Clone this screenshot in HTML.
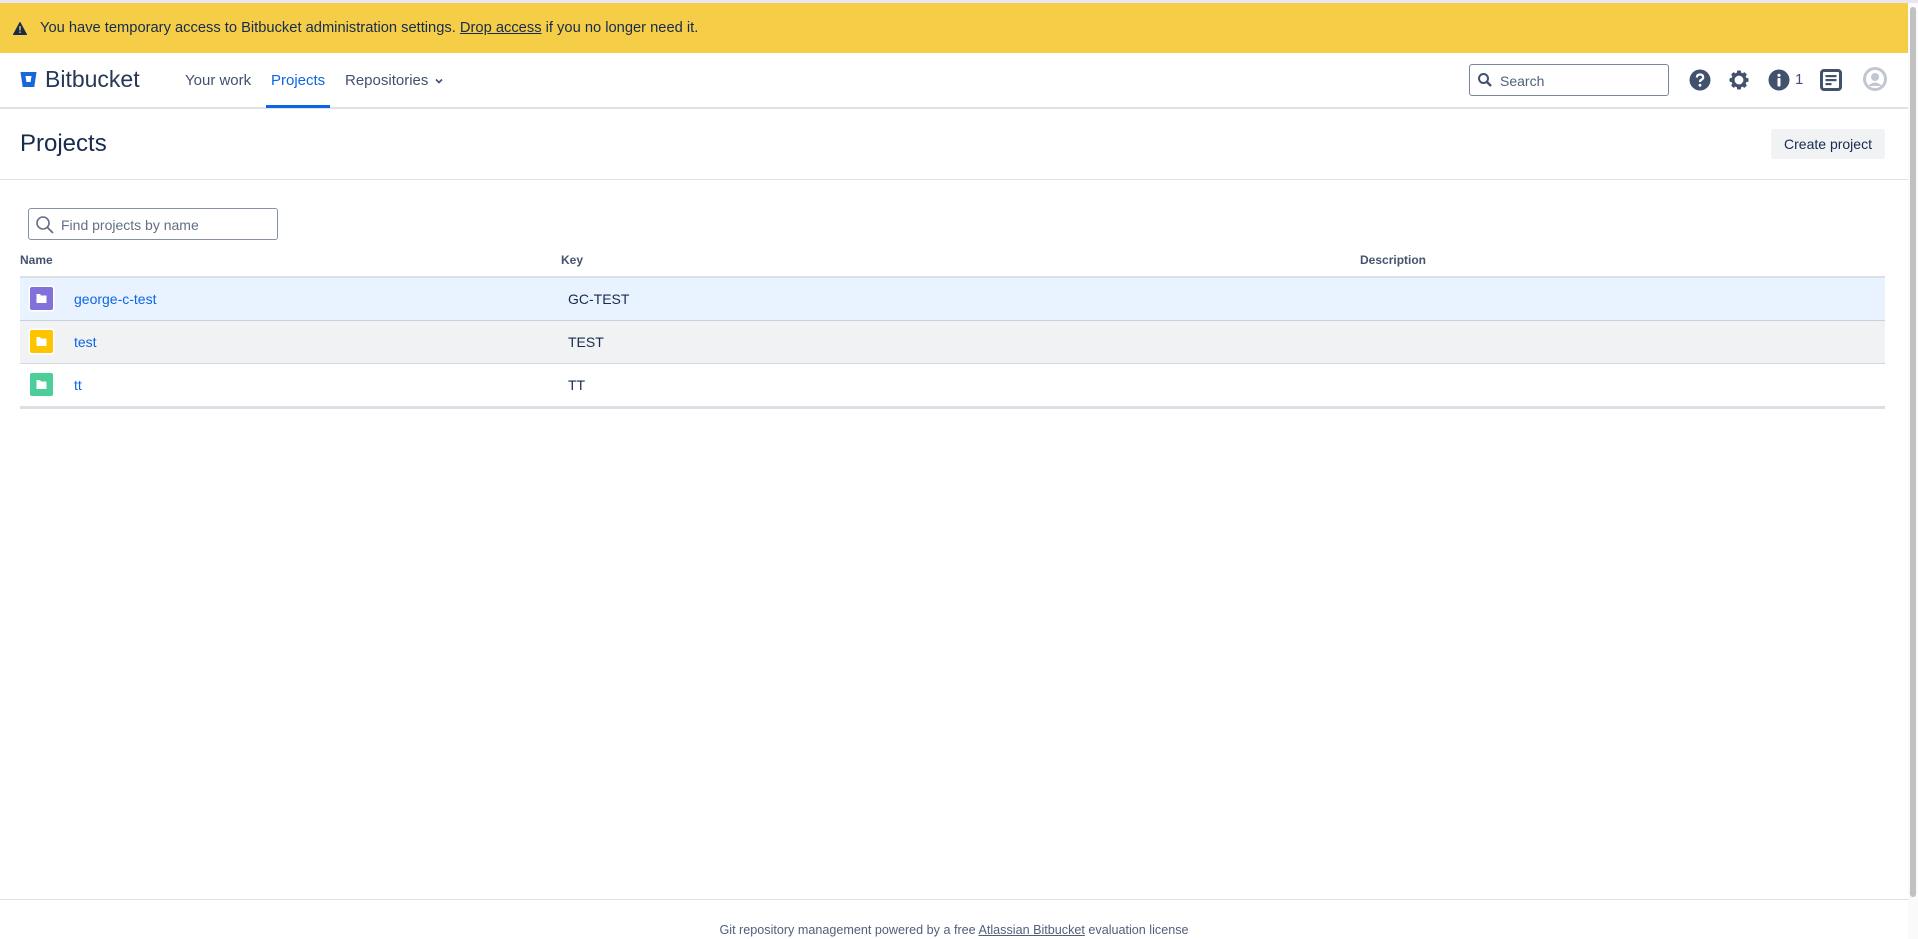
<!DOCTYPE html>
<html><head><meta charset="utf-8"><style>
*{box-sizing:border-box;margin:0;padding:0}
body{width:1918px;height:939px;overflow:hidden;background:#fff;font-family:"Liberation Sans",sans-serif;color:#172b4d;position:relative}
.top{position:absolute;left:0;top:0;width:1918px;height:3px;background:#ece6f2}
.banner{position:absolute;left:0;top:3px;width:1908px;height:50px;background:#f5cd47;font-size:14.7px;color:#172b4d}
.banner .t{position:absolute;left:40px;top:17px}
.scroll{position:absolute;right:0;top:3px;width:10px;height:936px;background:#fafafa}
.scroll div{position:absolute;left:2px;top:4px;width:6px;height:890px;background:#c1c1c1;border-radius:3px}
.nav{position:absolute;left:0;top:53px;width:1908px;height:56px;border-bottom:2px solid #dfe1e6}
.a{position:absolute}
.navi{font-size:15px;color:#42526e;top:19px}
.sep{position:absolute;left:0;width:1908px;height:1px;background:#dfe1e6}
</style></head><body>
<div class="top"></div>
<div class="banner">
<svg class="a" style="left:13px;top:19px" width="14" height="13" viewBox="0 0 14 13"><path d="M7 0.5 L13.5 12.5 H0.5 Z" fill="#172b4d" stroke="#172b4d" stroke-linejoin="round"/><rect x="6.3" y="4" width="1.4" height="4.5" fill="#f5cd47"/><rect x="6.3" y="9.5" width="1.4" height="1.4" fill="#f5cd47"/></svg>
<span class="t">You have temporary access to Bitbucket administration settings. <u>Drop access</u> if you no longer need it.</span>
</div>
<div class="scroll"><div></div></div>
<div class="nav">
<svg class="a" style="left:20px;top:18px" width="17" height="17" viewBox="0 0 17 17"><path d="M0.5 1 H16.5 L14.3 16 H2.7 Z" fill="#1868db"/><path d="M5.5 5 H11.5 L10.6 11 H6.4 Z" fill="#fff"/></svg>
<div class="a" style="left:45px;top:13px;font-size:23px;color:#253858">Bitbucket</div>
<div class="a navi" style="left:185px">Your work</div>
<div class="a navi" style="left:271px;color:#0c66e4">Projects</div>
<div class="a" style="left:266px;top:52px;width:64px;height:3px;background:#0c66e4"></div>
<div class="a navi" style="left:345px">Repositories</div>
<svg class="a" style="left:434px;top:24px" width="10" height="8" viewBox="0 0 10 8"><path d="M2 2.5 L5 5.5 L8 2.5" stroke="#42526e" stroke-width="1.6" fill="none"/></svg>
<div class="a" style="left:1469px;top:11px;width:200px;height:32px;border:1px solid #7a869a;border-radius:3px">
<svg class="a" style="left:7px;top:7px" width="16" height="16" viewBox="0 0 16 16"><circle cx="6.5" cy="6.5" r="4.5" stroke="#42526e" stroke-width="2" fill="none"/><path d="M10 10 L14 14" stroke="#42526e" stroke-width="2.4"/></svg>
<span class="a" style="left:30px;top:8px;font-size:14px;color:#505f79">Search</span></div>
<svg class="a" style="left:1689px;top:16px" width="22" height="22" viewBox="0 0 22 22"><circle cx="11" cy="11" r="10.5" fill="#42526e"/><path d="M7.8 8.5 Q8 5.5 11 5.5 Q14.2 5.5 14.2 8.3 Q14.2 10 12 11 Q11 11.6 11 13" stroke="#fff" stroke-width="2.2" fill="none"/><circle cx="11" cy="16.2" r="1.4" fill="#fff"/></svg>
<svg class="a" style="left:1728px;top:16px" width="22" height="22" viewBox="0 0 22 22"><g fill="#42526e"><rect x="9" y="1.5" width="4" height="19" rx="1"/><rect x="1.5" y="9" width="19" height="4" rx="1"/><rect x="9" y="1.5" width="4" height="19" rx="1" transform="rotate(45 11 11)"/><rect x="9" y="1.5" width="4" height="19" rx="1" transform="rotate(-45 11 11)"/></g><circle cx="11" cy="11" r="6" stroke="#42526e" stroke-width="3.2" fill="#fff"/></svg>
<svg class="a" style="left:1768px;top:16px" width="22" height="22" viewBox="0 0 22 22"><circle cx="11" cy="11" r="10.5" fill="#42526e"/><circle cx="11" cy="6.3" r="1.6" fill="#fff"/><rect x="9.5" y="9" width="3" height="8.5" rx="1" fill="#fff"/></svg>
<div class="a" style="left:1795px;top:18px;font-size:15px;color:#42526e">1</div>
<svg class="a" style="left:1820px;top:16px" width="22" height="22" viewBox="0 0 22 22"><rect x="1.5" y="1.5" width="19" height="19" rx="2.5" stroke="#42526e" stroke-width="3" fill="none"/><rect x="5.5" y="6" width="11" height="2.2" fill="#42526e"/><rect x="5.5" y="10" width="11" height="2.2" fill="#42526e"/><rect x="5.5" y="14" width="6" height="2.2" fill="#42526e"/></svg>
<svg class="a" style="left:1863px;top:14px" width="24" height="24" viewBox="0 0 24 24"><circle cx="12" cy="12" r="12" fill="#c1c7d0"/><circle cx="12" cy="12" r="9" fill="#fff"/><circle cx="12" cy="10" r="4" fill="#c1c7d0"/><path d="M5 19 Q12 12 19 19" fill="#c1c7d0"/></svg>
</div>
<div class="a" style="left:20px;top:130px;font-size:24px;color:#172b4d">Projects</div>
<div class="a" style="left:1771px;top:129px;width:114px;height:30px;background:#f1f2f4;border-radius:3px;font-size:14px;color:#172b4d;text-align:center;line-height:30px">Create project</div>
<div class="sep" style="top:179px"></div>
<div class="a" style="left:28px;top:208px;width:250px;height:32px;border:1px solid #8590a2;border-radius:3px">
<svg class="a" style="left:6px;top:6px" width="20" height="20" viewBox="0 0 20 20"><circle cx="8" cy="8" r="6" stroke="#626f86" stroke-width="1.6" fill="none"/><path d="M12.5 12.5 L18 18" stroke="#626f86" stroke-width="1.8"/></svg>
<span class="a" style="left:32px;top:8px;font-size:14px;color:#626f86">Find projects by name</span></div>
<div class="a" style="left:20px;top:253px;font-size:12px;font-weight:bold;color:#44546f">Name</div>
<div class="a" style="left:561px;top:253px;font-size:12px;font-weight:bold;color:#44546f">Key</div>
<div class="a" style="left:1360px;top:253px;font-size:12px;font-weight:bold;color:#44546f">Description</div>
<div class="a" style="left:20px;top:276px;width:1865px;height:2px;background:#dcdfe4"></div>
<div class="a" style="left:20px;top:278px;width:1865px;height:42px;background:#e9f2ff"></div>
<div class="a" style="left:20px;top:320px;width:1865px;height:1px;background:#c7d1e0"></div>
<div class="a" style="left:20px;top:321px;width:1865px;height:42px;background:#f1f2f4"></div>
<div class="a" style="left:20px;top:363px;width:1865px;height:1px;background:#d5d8dd"></div>
<div class="a" style="left:20px;top:406px;width:1865px;height:3px;background:#dcdfe4"></div>
<svg class="a" style="left:28px;top:285px" width="27" height="27" viewBox="0 0 27 27"><rect x="0.5" y="0.5" width="26" height="26" rx="3" fill="#fff"/><rect x="2" y="2" width="23" height="23" rx="2" fill="#8270db"/><path d="M8.5 9 H12 L13 10.5 H18.5 V18 H8.5 Z" fill="#fff"/></svg>
<div class="a" style="left:74px;top:291px;font-size:14px;color:#0c66e4">george-c-test</div>
<div class="a" style="left:568px;top:291px;font-size:14px;color:#172b4d">GC-TEST</div>
<svg class="a" style="left:28px;top:328px" width="27" height="27" viewBox="0 0 27 27"><rect x="0.5" y="0.5" width="26" height="26" rx="3" fill="#fff"/><rect x="2" y="2" width="23" height="23" rx="2" fill="#ffc400"/><path d="M8.5 9 H12 L13 10.5 H18.5 V18 H8.5 Z" fill="#fff"/></svg>
<div class="a" style="left:74px;top:334px;font-size:14px;color:#0c66e4">test</div>
<div class="a" style="left:568px;top:334px;font-size:14px;color:#172b4d">TEST</div>
<svg class="a" style="left:28px;top:371px" width="27" height="27" viewBox="0 0 27 27"><rect x="2" y="2" width="23" height="23" rx="2" fill="#4bce97"/><path d="M8.5 9 H12 L13 10.5 H18.5 V18 H8.5 Z" fill="#fff"/></svg>
<div class="a" style="left:74px;top:377px;font-size:14px;color:#0c66e4">tt</div>
<div class="a" style="left:568px;top:377px;font-size:14px;color:#172b4d">TT</div>
<div class="sep" style="top:899px"></div>
<div class="a" style="left:0;width:1908px;top:923px;text-align:center;font-size:12.6px;color:#505f79">Git repository management powered by a free <u>Atlassian Bitbucket</u> evaluation license</div>
</body></html>
